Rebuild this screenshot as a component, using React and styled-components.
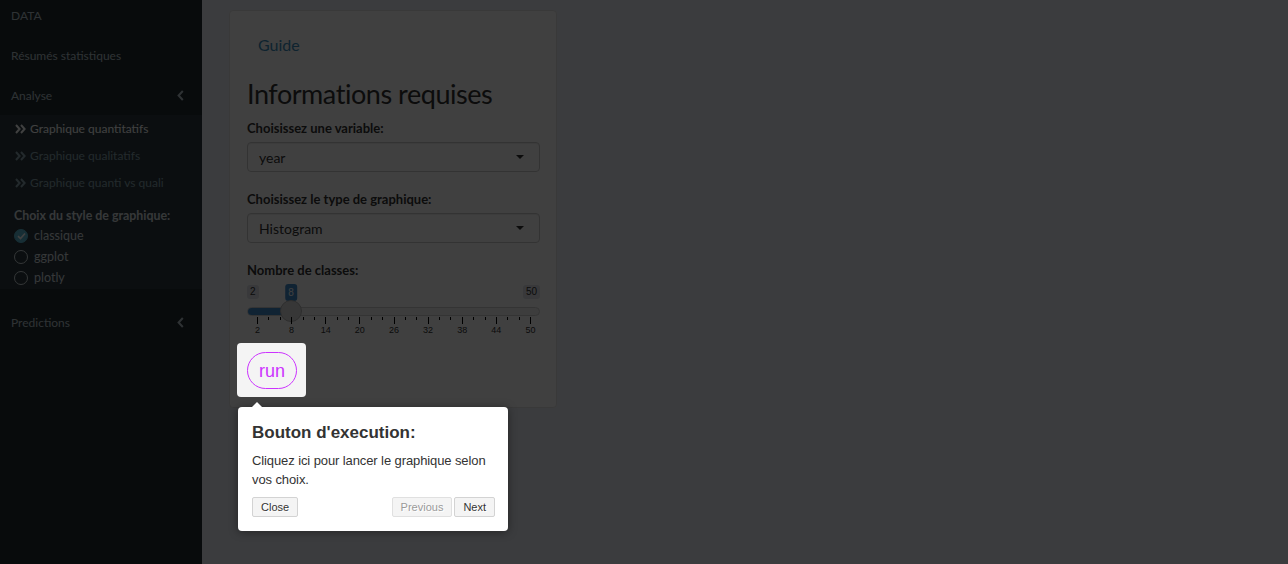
import React from 'react';
import styled, { createGlobalStyle } from 'styled-components';

const Global = createGlobalStyle`
  html, body { margin: 0; padding: 0; height: 100%; overflow: hidden; }
  body { font-family: Lato, "Open Sans", sans-serif; background: #ecf0f5; }
  *, *::before, *::after { box-sizing: border-box; }
`;

const Shell = styled.div`
  display: flex;
  height: 564px;
`;

/* ---------------- Sidebar ---------------- */
const Sidebar = styled.aside`
  width: 202px;
  flex: none;
  background: #222d32;
  color: #b8c7ce;
  font-size: 12px;
`;

const Menu = styled.ul`
  list-style: none;
  margin: -5px 0 0;
  padding: 0;
`;

const MenuItem = styled.li`
  height: 40px;
  margin-top: ${(p) => p.$gap || 0}px;
  display: flex;
  align-items: center;
  justify-content: space-between;
  padding: 0 18px 0 11px;
`;

const SubMenu = styled.ul`
  list-style: none;
  margin: 0;
  padding: 0 0 1px;
  background: #2c3b41;
`;

const SubItem = styled.li`
  height: 27px;
  display: flex;
  align-items: center;
  gap: 4px;
  padding-left: 15px;
  color: ${(p) => (p.$active ? '#ffffff' : '#8aa4af')};
`;

const GroupLabel = styled.div`
  margin-top: 10px;
  height: 19px;
  line-height: 19px;
  padding-left: 14px;
  font-weight: 700;
  font-size: 12.4px;
  color: #d6dde0;
`;

const RadioRow = styled.label`
  height: 21px;
  display: flex;
  align-items: center;
  gap: 6px;
  padding-left: 14px;
  font-size: 12.5px;
  color: #d6dde0;
`;

const RadioDot = styled.span`
  width: 14px;
  height: 14px;
  border-radius: 50%;
  flex: none;
  display: flex;
  align-items: center;
  justify-content: center;
  border: 1px solid ${(p) => (p.$checked ? '#5bb9d4' : '#cfd6da')};
  background: ${(p) => (p.$checked ? '#5bb9d4' : 'transparent')};
`;

const Chevron = () => (
  <svg width="7" height="11" viewBox="0 0 7 11">
    <path d="M5.8 1 L1.6 5.5 L5.8 10" fill="none" stroke="#b8c7ce" strokeWidth="2" />
  </svg>
);

const DoubleAngle = ({ color }) => (
  <svg width="11" height="10" viewBox="0 0 11 10">
    <path d="M1 1 L4.6 5 L1 9 M6 1 L9.6 5 L6 9" fill="none" stroke={color} strokeWidth="2" />
  </svg>
);

const Check = () => (
  <svg width="9" height="8" viewBox="0 0 9 8">
    <path d="M1 4.2 L3.5 6.5 L8 1.5" fill="none" stroke="#ffffff" strokeWidth="1.6" />
  </svg>
);

/* ---------------- Main ---------------- */
const Main = styled.main`
  flex: 1;
  padding: 10px 0 0 27px;
`;

const Card = styled.section`
  width: 328px;
  background: #ffffff;
  border: 1px solid #e3e3e3;
  border-radius: 4px;
  padding: 24px 16px 10px 17px;
  color: #333;
`;

const GuideLink = styled.a`
  display: block;
  margin-left: 11px;
  font-size: 16px;
  line-height: 20px;
  color: #3c8dbc;
  text-decoration: none;
`;

const Heading = styled.h3`
  margin: 22px 0 8px;
  font-size: 27px;
  letter-spacing: -0.45px;
  line-height: 34px;
  font-weight: 400;
  color: #333;
`;

const Label = styled.label`
  display: block;
  font-size: 13px;
  font-weight: 700;
  line-height: 18px;
  margin: ${(p) => p.$top || 0}px 0 5px;
`;

const Select = styled.div`
  height: 30px;
  border: 1px solid #cccccc;
  border-radius: 4px;
  background: #ffffff;
  display: flex;
  align-items: center;
  justify-content: space-between;
  padding: 0 15px 0 11px;
  font-size: 14px;
  color: #333;
  box-shadow: inset 0 1px 1px rgba(0, 0, 0, 0.075);
`;

const Caret = styled.span`
  width: 0;
  height: 0;
  border-left: 4px solid transparent;
  border-right: 4px solid transparent;
  border-top: 4px solid #333;
`;

/* slider */
const Slider = styled.div`
  position: relative;
  height: 57px;
  margin-top: -3px;
  font-family: "Liberation Sans", Arial, sans-serif;
`;

const EdgeTag = styled.span`
  position: absolute;
  top: 4px;
  ${(p) => (p.$right ? 'right: 0;' : 'left: 0;')}
  padding: 1px 3px;
  font-size: 10px;
  line-height: 12px;
  color: #333;
  background: #e1e4e9;
  border-radius: 3px;
`;

const ValueTag = styled.span`
  position: absolute;
  top: 3px;
  transform: translateX(-50%);
  padding: 2px 3px;
  font-size: 10px;
  line-height: 13px;
  color: #fff;
  background: #428bca;
  border-radius: 3px;
`;

const Track = styled.div`
  position: absolute;
  left: 0;
  right: 0;
  top: 26px;
  height: 9px;
  border-radius: 5px;
  background: #f2f2f2;
  border: 1px solid #cfcfcf;
  overflow: hidden;
`;

const Fill = styled.div`
  height: 100%;
  background: #428bca;
`;

const Handle = styled.div`
  position: absolute;
  top: 19px;
  width: 22px;
  height: 22px;
  transform: translateX(-50%);
  border-radius: 50%;
  background: #dcdcdc;
  border: 1px solid #b5b5b5;
`;

const Tick = styled.span`
  position: absolute;
  top: 36px;
  width: 1px;
  height: ${(p) => (p.$major ? 7 : 3)}px;
  background: #000;
`;

const TickLabel = styled.span`
  position: absolute;
  top: 43px;
  transform: translateX(-50%);
  font-size: 9px;
  line-height: 12px;
  color: #333;
`;

/* highlighted run button + intro overlay */
const Highlight = styled.div`
  position: relative;
  z-index: 10;
  display: inline-flex;
  margin: 5px 0 0 -10px;
  padding: 9px 9px 8px 10px;
  background: #f4f4f4;
  border-radius: 4px;
  box-shadow: 0 0 0 5000px rgba(0, 0, 0, 0.75);
`;

const RunButton = styled.button`
  width: 50px;
  height: 37px;
  border: 1px solid #cc33ff;
  border-radius: 19px;
  background: transparent;
  color: #cc33ff;
  font-family: "Liberation Sans", Arial, sans-serif;
  font-size: 18px;
  padding: 1px 0 0;
`;

const Tooltip = styled.div`
  position: absolute;
  top: calc(100% + 10px);
  left: 1px;
  width: 270px;
  padding: 14px 13px 14px 14px;
  background: #fff;
  border-radius: 4px;
  box-shadow: 0 1px 10px rgba(0, 0, 0, 0.4);
  font-family: "Liberation Sans", Arial, sans-serif;
  color: #333;

  &::before {
    content: '';
    position: absolute;
    top: -5px;
    left: 14px;
    border-left: 5px solid transparent;
    border-right: 5px solid transparent;
    border-bottom: 5px solid #fff;
  }
`;

const TipTitle = styled.h1`
  margin: 0;
  font-size: 17px;
  line-height: 24px;
  font-weight: 700;
  color: #333;
`;

const TipText = styled.p`
  margin: 6px 0 8px;
  font-size: 13px;
  letter-spacing: -0.1px;
  line-height: 19px;
`;

const TipButtons = styled.div`
  display: flex;
  gap: 2px;
`;

const TipButton = styled.button`
  height: 20px;
  padding: 0 8px;
  margin-right: ${(p) => (p.$push ? 'auto' : '0')};
  font-family: "Liberation Sans", Arial, sans-serif;
  font-size: 11px;
  color: ${(p) => (p.$disabled ? '#9a9a9a' : '#333')};
  background: #f4f4f4;
  border: 1px solid ${(p) => (p.$disabled ? '#e0e0e0' : '#d3d3d3')};
  border-radius: 2px;
  text-shadow: 1px 1px 0 #fff;
`;

const MIN = 2;
const MAX = 50;
const VALUE = 8;
const PAD = 10;
const SPAN = 273;
const pos = (v) => PAD + ((v - MIN) / (MAX - MIN)) * SPAN;
const majors = [2, 8, 14, 20, 26, 32, 38, 44, 50];

export default function App() {
  const minors = [];
  for (let i = 0; i < majors.length - 1; i++) {
    const a = pos(majors[i]);
    const b = pos(majors[i + 1]);
    minors.push(a + (b - a) / 3, a + (2 * (b - a)) / 3);
  }
  return (
    <Shell>
      <Global />
      <Sidebar>
        <Menu>
          <MenuItem>DATA</MenuItem>
          <MenuItem>Résumés statistiques</MenuItem>
          <MenuItem>
            Analyse
            <Chevron />
          </MenuItem>
          <SubMenu>
            <SubItem $active>
              <DoubleAngle color="#ffffff" />
              Graphique quantitatifs
            </SubItem>
            <SubItem>
              <DoubleAngle color="#8aa4af" />
              Graphique qualitatifs
            </SubItem>
            <SubItem>
              <DoubleAngle color="#8aa4af" />
              Graphique quanti vs quali
            </SubItem>
            <GroupLabel>Choix du style de graphique:</GroupLabel>
            <RadioRow>
              <RadioDot $checked>
                <Check />
              </RadioDot>
              classique
            </RadioRow>
            <RadioRow>
              <RadioDot />
              ggplot
            </RadioRow>
            <RadioRow>
              <RadioDot />
              plotly
            </RadioRow>
          </SubMenu>
          <MenuItem $gap={13}>
            Predictions
            <Chevron />
          </MenuItem>
        </Menu>
      </Sidebar>
      <Main>
        <Card>
          <GuideLink href="#">Guide</GuideLink>
          <Heading>Informations requises</Heading>
          <Label>Choisissez une variable:</Label>
          <Select>
            year
            <Caret />
          </Select>
          <Label $top={18}>Choisissez le type de graphique:</Label>
          <Select>
            Histogram
            <Caret />
          </Select>
          <Label $top={18}>Nombre de classes:</Label>
          <Slider>
            <EdgeTag>{MIN}</EdgeTag>
            <EdgeTag $right>{MAX}</EdgeTag>
            <ValueTag style={{ left: pos(VALUE) }}>{VALUE}</ValueTag>
            <Track>
              <Fill style={{ width: pos(VALUE) }} />
            </Track>
            <Handle style={{ left: pos(VALUE) }} />
            {majors.map((m) => (
              <React.Fragment key={m}>
                <Tick $major style={{ left: pos(m) }} />
                <TickLabel style={{ left: pos(m) + 0.5 }}>{m}</TickLabel>
              </React.Fragment>
            ))}
            {minors.map((x, i) => (
              <Tick key={i} style={{ left: Math.round(x) }} />
            ))}
          </Slider>
          <Highlight>
            <RunButton>run</RunButton>
            <Tooltip>
              <TipTitle>Bouton d'execution:</TipTitle>
              <TipText>Cliquez ici pour lancer le graphique selon vos choix.</TipText>
              <TipButtons>
                <TipButton $push>Close</TipButton>
                <TipButton $disabled>Previous</TipButton>
                <TipButton>Next</TipButton>
              </TipButtons>
            </Tooltip>
          </Highlight>
        </Card>
      </Main>
    </Shell>
  );
}
